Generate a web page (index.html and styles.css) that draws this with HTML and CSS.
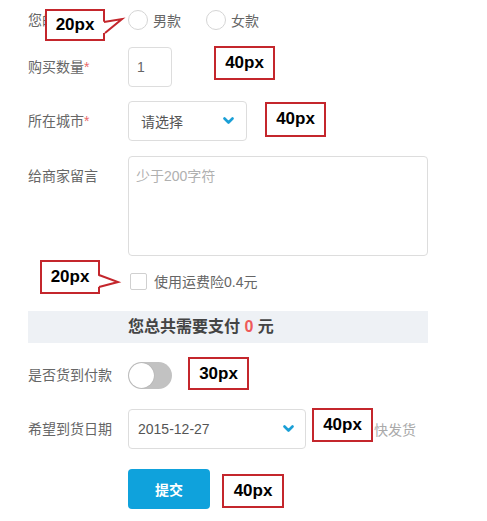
FILE: index.html
```html
<!DOCTYPE html>
<html lang="zh-CN">
<head>
    <meta charset="UTF-8">
    <meta name="viewport" content="width=device-width, initial-scale=1.0">
    <title>订单表单</title>
    <link rel="stylesheet" href="styles.css">
</head>
<body>
    <div class="page">
        <form class="order-form">
            <div class="row row-sex">
                <span class="label">您的性别</span>
                <label class="radio"><span class="radio-dot"></span>男款</label>
                <label class="radio"><span class="radio-dot"></span>女款</label>
            </div>

            <div class="row row-qty">
                <span class="label">购买数量<em class="req">*</em></span>
                <input class="qty" type="text" value="1">
            </div>

            <div class="row row-city">
                <span class="label">所在城市<em class="req">*</em></span>
                <div class="select select-city">
                    <span>请选择</span>
                    <svg class="chevron" width="11" height="8" viewBox="0 0 11 8"><path d="M1.5 1.5 L5.5 5.5 L9.5 1.5" fill="none" stroke="#1a9fd6" stroke-width="2.6" stroke-linecap="round" stroke-linejoin="round"/></svg>
                </div>
            </div>

            <div class="row row-msg">
                <span class="label">给商家留言</span>
                <textarea class="msg" placeholder="少于200字符"></textarea>
            </div>

            <div class="row row-check">
                <span class="label"></span>
                <label class="check"><span class="check-box"></span>使用运费险0.4元</label>
            </div>

            <div class="total">您总共需要支付 <span class="total-num">0</span> 元</div>

            <div class="row row-cod">
                <span class="label">是否货到付款</span>
                <div class="switch"><span class="knob"></span></div>
            </div>

            <div class="row row-date">
                <span class="label">希望到货日期</span>
                <div class="select select-date">
                    <span>2015-12-27</span>
                    <svg class="chevron" width="11" height="8" viewBox="0 0 11 8"><path d="M1.5 1.5 L5.5 5.5 L9.5 1.5" fill="none" stroke="#1a9fd6" stroke-width="2.6" stroke-linecap="round" stroke-linejoin="round"/></svg>
                </div>
                <span class="hint">快发货</span>
            </div>

            <div class="row row-submit">
                <span class="label"></span>
                <button class="submit" type="button">提交</button>
            </div>
        </form>

        <!-- notas de medida encima del formulario -->
        <div class="tip tip-sex">20px
            <svg class="tail" width="26" height="32" viewBox="0 0 26 32">
                <polygon points="0,13 21,10 5,24 0,24" fill="#fff"/>
                <path d="M3 13 L21 10 L4 24" fill="none" stroke="#c4262c" stroke-width="2" stroke-linejoin="miter"/>
            </svg>
        </div>
        <div class="tip tip-qty">40px</div>
        <div class="tip tip-city">40px</div>
        <div class="tip tip-check">20px
            <svg class="tail" width="26" height="34" viewBox="0 0 26 34">
                <polygon points="0,15 22,22 5,27 0,27" fill="#fff"/>
                <path d="M3 15 L22 22 L3 27" fill="none" stroke="#c4262c" stroke-width="2"/>
            </svg>
        </div>
        <div class="tip tip-cod">30px</div>
        <div class="tip tip-date">40px</div>
        <div class="tip tip-submit">40px</div>
    </div>
</body>
</html>
```

FILE: styles.css
```css
body {
    margin: 0;
    font-family: "Liberation Sans", "Noto Sans CJK SC", sans-serif;
    font-size: 14px;
    color: #555;
    background-color: #fff;
}
.page {
    position: relative;
    width: 487px;
    height: 521px;
    overflow: hidden;
}
.order-form {
    width: 400px;
    padding: 10px 0 0 28px;
}
.row {
    display: flex;
    align-items: center;
    margin-bottom: 16px;
}
.label {
    flex: none;
    width: 100px;
    color: #666;
    line-height: 20px;
}
.req {
    font-style: normal;
    color: #e96a6a;
}

/* radios */
.row-sex {
    height: 20px;
    margin-bottom: 17px;
}
.radio {
    display: flex;
    align-items: center;
    color: #666;
    margin-right: 25px;
}
.radio-dot {
    width: 18px;
    height: 18px;
    border: 1px solid #d5d5d5;
    border-radius: 50%;
    margin-right: 5px;
}

.row-qty {
    margin-bottom: 14px;
}
.qty {
    box-sizing: border-box;
    width: 44px;
    height: 40px;
    padding: 0 8px;
    border: 1px solid #ddd;
    border-radius: 4px;
    font-family: inherit;
    font-size: 14px;
    color: #666;
    outline: none;
}

.row-city {
    margin-bottom: 15px;
}
.select {
    box-sizing: border-box;
    height: 40px;
    display: flex;
    align-items: center;
    justify-content: space-between;
    border: 1px solid #ddd;
    border-radius: 4px;
    color: #555;
}
.select-city {
    width: 119px;
    padding: 0 12px 0 12px;
}
.select-date {
    width: 178px;
    padding: 0 11px 0 9px;
}
.chevron {
    display: block;
}

.row-msg {
    align-items: flex-start;
    margin-bottom: 15px;
}
.row-msg .label {
    padding-top: 10px;
}
.msg {
    box-sizing: border-box;
    width: 300px;
    height: 100px;
    padding: 9px 7px;
    border: 1px solid #ddd;
    border-radius: 4px;
    font-family: inherit;
    font-size: 14px;
    line-height: 20px;
    resize: none;
    outline: none;
}
.msg::placeholder {
    color: #b0b0b0;
}

.row-check {
    height: 20px;
    margin-bottom: 20px;
}
.check {
    display: flex;
    align-items: center;
    color: #666;
}
.check-box {
    width: 15px;
    height: 15px;
    border: 1px solid #d0d0d0;
    border-radius: 2px;
    margin: 0 7px 0 2px;
}

.total {
    height: 32px;
    line-height: 32px;
    padding-left: 100px;
    margin-bottom: 17px;
    background-color: #eef1f5;
    font-size: 16px;
    font-weight: bold;
    color: #444;
}
.total-num {
    color: #ee5a5a;
}

.row-cod {
    height: 30px;
    margin-bottom: 19px;
}
.switch {
    box-sizing: border-box;
    width: 44px;
    height: 27px;
    padding: 1px;
    display: flex;
    align-items: center;
    border-radius: 14px;
    background-color: #c2c2c2;
}
.knob {
    width: 25px;
    height: 25px;
    border-radius: 50%;
    background-color: #fff;
    box-shadow: 0 0 1px rgba(0, 0, 0, 0.3);
}

.row-date {
    margin-bottom: 20px;
}
.hint {
    margin-left: 68px;
    color: #aaa;
}

.submit {
    width: 82px;
    height: 40px;
    border: none;
    border-radius: 4px;
    background-color: #0fa2dc;
    color: #fff;
    font-family: inherit;
    font-size: 14px;
    font-weight: bold;
    cursor: pointer;
}

/* medidas */
.tip {
    position: absolute;
    box-sizing: border-box;
    width: 61px;
    height: 34px;
    border: 2px solid #c4262c;
    background-color: #fff;
    color: #000;
    font-family: "Liberation Sans", sans-serif;
    font-size: 17px;
    font-weight: bold;
    line-height: 30px;
    text-align: center;
}
.tail {
    position: absolute;
    left: 54px;
    top: -2px;
    overflow: visible;
}
.tip-sex {
    left: 45px;
    top: 9px;
    width: 60px;
    height: 32px;
    line-height: 28px;
}
.tip-qty {
    left: 214px;
    top: 46px;
}
.tip-city {
    left: 265px;
    top: 102px;
    height: 35px;
}
.tip-check {
    left: 40px;
    top: 260px;
    width: 60px;
    height: 34px;
}
.tip-cod {
    left: 188px;
    top: 357px;
    height: 33px;
    line-height: 29px;
}
.tip-date {
    left: 312px;
    top: 408px;
}
.tip-submit {
    left: 222px;
    top: 474px;
    width: 62px;
}
```
